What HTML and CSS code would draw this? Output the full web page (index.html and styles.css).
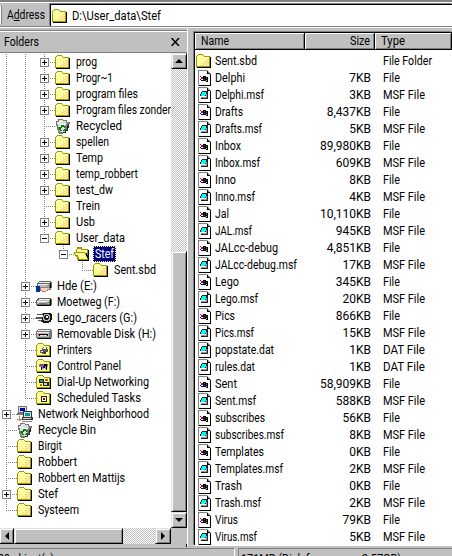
FILE: index.html
```html
<!DOCTYPE html>
<html lang="en">
<head>
<meta charset="utf-8">
<title>D:\User_data\Stef</title>
<link rel="stylesheet" href="styles.css">
</head>
<body>
<svg class="defs" width="0" height="0" shape-rendering="crispEdges">
  <defs>
    <pattern id="dither" width="2" height="2" patternUnits="userSpaceOnUse"><rect width="2" height="2" fill="#ffff99"/><path d="M0 0h1v1H0zM1 1h1v1H1z" fill="#ffcc99"/></pattern>
    <symbol id="folder" viewBox="0 0 16 16">
      <path d="M2 1h5v1h1v1h6v11H0V3h1V2h1z" fill="#999900"/>
      <path d="M2 2h5v1h1v1h5v9H1V3h1z" fill="#ffff99"/>
      <path d="M10 6h3v7H4v-1h2v-2h2V8h2z" fill="url(#dither)"/>
      <path d="M14 4h1v11H1v-1h13z" fill="#000"/>
      <path d="M2 4h5v1H2z" fill="#ffffe8"/>
    </symbol>
    <symbol id="open" viewBox="0 0 16 16">
      <path d="M3 1h5v2h6v11H3v-3H2V3h1z" fill="#999900"/>
      <path d="M3 3h4v1h6v4H3z" fill="#ffff99"/>
      <path d="M0 6h11v1h1v2h1v2h1v3H4v-2H3v-2H1V8H0z" fill="#999900"/>
      <path d="M1 7h10v2h1v2h1v2H5v-2H4V9H2V8H1z" fill="#ffff99"/>
      <path d="M14 4h1v11H4v-1h10zM12 7h1v2h1v3h-1v-2h-1z" fill="#000"/>
    </symbol>
    <symbol id="bin" viewBox="0 0 16 16">
      <path d="M1 3h2V1h5v1h4v2h3v2h-1v4h-1v3h-2v2H8v1H4v-1H3v-3H2V8H1z" fill="#777"/>
      <path d="M2 4h2V2h4v1h3v2h1v1h-2v8H5v-1H4v-4H3V6H2z" fill="#ddd"/>
      <path d="M4 3h3v1H4zM2 5h4v1h5v1H5V6H2z" fill="#fff"/>
      <path d="M14 6v4h-1v3h-2v2H8v-1h2v-2h2V8h1V6z" fill="#222"/>
      <path d="M6 7h3v1h1v2H9V9H7v1H6zM4 9h2v3h1v1H5v-1H4zM8 12h1v-1h2v2H8z" fill="#008000"/>
    </symbol>
    <symbol id="drive" viewBox="0 0 16 16">
      <path d="M2 4h13v1h1v6h-1v1H1v-1H0V6h1V5h1z" fill="#666"/>
      <path d="M3 5h11v1H3zM1 7h12v1H1z" fill="#eee"/>
      <path d="M2 6h11v1H2zM1 8h12v2H1z" fill="#bbb"/>
      <path d="M14 5h1v6h-1zM1 11h14v1H1z" fill="#000"/>
      <path d="M3 9h8v1H3z" fill="#777"/><path d="M11 8h2v1h-2z" fill="#00c000"/>
    </symbol>
    <symbol id="shared" viewBox="0 0 16 16">
      <path d="M3 3h12v1h1v6h-1v1H1V5h1V4h1z" fill="#666"/>
      <path d="M3 4h11v1H3zM2 6h11v1H2z" fill="#eee"/><path d="M2 7h11v2H2z" fill="#bbb"/>
      <path d="M14 5h1v5h-1z" fill="#000"/><path d="M11 7h2v1h-2z" fill="#00c000"/>
      <path d="M0 8h4v6H0z" fill="#003399"/><path d="M4 9h9v1h2v2h-3v1h-2v1H6v-1H4z" fill="#a77"/><path d="M5 10h8v1h-2v2H6v-1H5z" fill="#ffd0c0"/>
    </symbol>
    <symbol id="racer" viewBox="0 0 16 16">
      <path d="M7 3h8v1h1v6h-1v2h-2v1H7v-1H5v-2h1V7h1V5h-1z" fill="#111"/>
      <path d="M8 4h5v1h1v5h-1v1H8v-1H7V6h1z" fill="#bbb"/><path d="M9 5h3v1h1v3h-1v1H9V9H8V6h1z" fill="#222"/>
      <path d="M10 6h2v2h-2z" fill="#eee"/><path d="M1 4h5v1H1zM0 7h6v2H0zM2 10h4v1H2z" fill="#555"/>
    </symbol>
    <symbol id="removable" viewBox="0 0 16 16">
      <path d="M2 3h13v1h1v8h-1v1H1v-1H0V5h1V4h1z" fill="#777"/><path d="M2 4h12v1H2zM1 6h12v1H1z" fill="#eee"/>
      <path d="M1 7h12v4H1z" fill="#bbb"/><path d="M3 8h9v2H3z" fill="#000"/><path d="M4 9h7v1H4z" fill="#ddd"/><path d="M2 8h1v1H2z" fill="#e00"/><path d="M14 5h1v7H2v1h13V5z" fill="#111"/>
    </symbol>
    <symbol id="special" viewBox="0 0 16 16">
      <path d="M2 1h5v1h1v1h6v11H0V3h1V2h1z" fill="#999900"/><path d="M2 2h5v1h1v1h5v9H1V3h1z" fill="#ffff99"/><path d="M14 4h1v11H1v-1h13z" fill="#000"/>
    </symbol>
    <symbol id="printers" viewBox="0 0 16 16"><use href="#special"/><path d="M7 5h4v2h1v3h-2v2H6v-1H4V8h2V6h1z" fill="#555"/><path d="M8 5h2v2H7V6h1zM5 9h2v1H5z" fill="#fff"/><path d="M8 10h2v1H8z" fill="#222"/></symbol>
    <symbol id="control" viewBox="0 0 16 16"><use href="#special"/><path d="M3 6h9v3h-1v2H4V9H3z" fill="#888"/><path d="M4 6h3v2H4z" fill="#c33"/><path d="M8 6h3v2H8zM5 9h1v3H5zM10 8h1v4h-1z" fill="#000"/><path d="M7 8h2v2H7z" fill="#00c"/><path d="M3 9h2v2H3zM8 10h1v1H8z" fill="#fff"/></symbol>
    <symbol id="dialup" viewBox="0 0 16 16"><use href="#special"/><path d="M3 5h5v4H3zM7 8h6v4H7z" fill="#222"/><path d="M4 6h3v2H4z" fill="#4488aa"/><path d="M8 9h3v2H8z" fill="#dd9"/><path d="M9 5h3v2H9zM4 10h2v2H4z" fill="#bb6600"/></symbol>
    <symbol id="tasks" viewBox="0 0 16 16"><use href="#special"/><path d="M5 6h6v6H5z" fill="#222"/><path d="M6 7h4v4H6z" fill="#fff"/><path d="M7 8h2v2H7z" fill="#800"/></symbol>
    <symbol id="network" viewBox="0 0 16 16">
      <path d="M1 0h9v7H9v2H0V7h1z" fill="#777"/><path d="M2 1h7v5H2z" fill="#ddd"/><path d="M3 2h5v3H3z" fill="#0000aa"/>
      <path d="M6 5h9v6h1v3H5v-3h1z" fill="#333"/><path d="M7 6h7v5H7z" fill="#ddd"/><path d="M8 7h5v3H8z" fill="#0099aa"/><path d="M6 12h8v1H6z" fill="#ddd"/>
      <path d="M2 10h1v3H2zM0 13h5v1H0zM5 15h10v1H5z" fill="#888"/><path d="M2 13h2v2H2z" fill="#e90"/>
    </symbol>
    <symbol id="page" viewBox="0 0 13 16"><path d="M0 0h9l4 4v12H0z" fill="#808080"/><path d="M1 1h8v3h3v11H1z" fill="#fff"/><path d="M12 4h1v12H1v-1h11zM9 1h1v2h2v1H9z" fill="#000"/></symbol>
    <symbol id="file" viewBox="0 0 13 16"><use href="#page" width="13" height="16"/><path d="M2 6h1v1H2zM3 7h2v2H3z" fill="#d00"/><path d="M2 9h1v1H2zM3 10h2v1H3z" fill="#00c"/><path d="M5 6h3v1h2v5H8v-1H5z" fill="#000"/><path d="M6 7h1v1H6z" fill="#c00"/><path d="M8 8h1v1H8z" fill="#0a0"/><path d="M5 9h2v1H5z" fill="#22f"/><path d="M8 10h1v1H8z" fill="#dd0"/></symbol>
    <symbol id="msf" viewBox="0 0 13 16"><use href="#page" width="13" height="16"/><path d="M4 4h6v8H3v-1h5V9H2V7h1V5h1z" fill="#222"/><path d="M4 5h4v3H7v1H3V7h1z" fill="#00ffff"/><path d="M3 10h5v1H3zM8 7h1v4H8z" fill="#999"/></symbol>
  </defs>
</svg>
<div class="window">
  <header class="address-bar">
    <div class="grip"></div>
    <span class="address-label"><span class="text" data-width="38">A<u>d</u>dress</span></span>
    <div class="address-box"><svg class="icon" width="16" height="16"><use href="#folder"/></svg><span class="text" data-width="89">D:\User_data\Stef</span></div>
  </header>
  <main class="panes">
    <section class="folders">
      <div class="folders-title"><span class="text" data-width="35">Folders</span><svg class="close" width="9" height="8" viewBox="0 0 9 8"><path d="M.5 0l7.500 8M8 0L.5 8" stroke="#000" stroke-width="1.500"/></svg></div>
      <div class="tree-area">
        <div class="tree" id="tree"></div>
        <div class="vscroll"><div class="button"><i class="arrow up"></i></div><div class="track"></div><div class="thumb"></div><div class="button"><i class="arrow down"></i></div></div>
        <div class="hscroll"><div class="button first"><i class="arrow left"></i></div><div class="thumb"></div><div class="track"></div><div class="button"><i class="arrow right"></i></div></div>
        <div class="corner"></div>
      </div>
    </section>
    <section class="files">
      <div class="head"><div><span class="text" data-width="28">Name</span></div><div class="size"><span class="text" data-width="20">Size</span></div><div><span class="text" data-width="24">Type</span></div></div>
      <div class="list" id="list"></div>
    </section>
  </main>
  <footer class="status"><div class="status-cell first"><span class="text" data-width="56">28 object(s)</span></div><div class="status-cell"><span class="text" data-width="160">171MB (Disk free space: 2.57GB)</span></div></footer>
</div>
<script src="script.js"></script>
</body>
</html>
```
FILE: styles.css
```css
* { box-sizing: border-box; }
body { margin: 0; background: #c0c0c0; overflow: hidden; }
.defs { display: block; position: absolute; }
.window { width: 452px; height: 556px; display: flex; flex-direction: column; overflow: hidden; background: #c0c0c0; color: #000; font: 12px/16px Roboto, "Liberation Sans", sans-serif; }
.text { display: inline-block; height: 16px; white-space: pre; vertical-align: top; }
.ink { display: inline-block; transform-origin: 0 50%; }
.icon { flex: none; display: block; }

.address-bar { height: 27px; flex: none; display: flex; align-items: center; border-top: 2px solid #808080; border-bottom: 1px solid #808080; box-shadow: inset 0 1px #fff; padding-top: 2px; }
.grip { width: 2px; height: 18px; border-right: 1px solid #808080; background: #fff; }
.address-label { width: 48px; padding-left: 5px; }
.address-box { flex: 1; align-self: stretch; display: flex; align-items: center; gap: 4px; padding-left: 1px; background: #fff; border: solid #000; border-width: 1px 0 0 1px; box-shadow: -1px -1px #808080; }

.panes { flex: 1; min-height: 0; display: flex; gap: 6px; border-top: 1px solid #fff; }
.folders { width: 188px; display: flex; flex-direction: column; border-right: 1px solid #fff; border-top: 2px solid #c0c0c0; }
.folders-title { height: 23px; display: flex; align-items: center; justify-content: space-between; padding: 1px 7px 0 4px; border-top: 1px solid #808080; border-bottom: 1px solid #808080; box-shadow: inset 0 1px #fff; }
.tree-area { flex: 1; display: grid; grid-template: 475px 16px / 171px 16px; border-right: 1px solid #000; }
.tree { background: #fff; padding-top: 1px; overflow: hidden; }
.node { display: flex; height: 16px; margin-left: -2px; }
.cell { width: 19px; flex: none; height: 16px; position: relative; }
.cell.line, .cell.last { background: repeating-linear-gradient(#808080 0 1px, transparent 1px 2px) 8px 0 / 1px 16px no-repeat; }
.cell.last { background-size: 1px 9px; }
.cell.joint::before { content: ""; position: absolute; left: 8px; top: 8px; width: 11px; height: 1px; background: repeating-linear-gradient(90deg, #808080 0 1px, transparent 1px 2px); }
.box { position: absolute; left: 4px; top: 4px; width: 9px; height: 9px; border: 1px solid #808080; background: linear-gradient(#000, #000) 1px 3px / 5px 1px no-repeat, #fff; }
.box.plus { background: linear-gradient(#000, #000) 1px 3px / 5px 1px no-repeat, linear-gradient(#000, #000) 3px 1px / 1px 5px no-repeat, #fff; }
.name { margin-left: 3px; padding: 0 2px; }
.name.selected { background: #000080; color: #fff; outline: 1px dotted #ffff7f; outline-offset: -1px; }

.vscroll { display: flex; flex-direction: column; }
.track { flex: 1; background: repeating-conic-gradient(#c0c0c0 0 25%, #fff 0 50%) 0 0 / 2px 2px; }
.thumb, .button { background: #c0c0c0; border: 1px solid; border-color: #dfdfdf #000 #000 #dfdfdf; box-shadow: inset 1px 1px #fff, inset -1px -1px #808080; }
.vscroll .thumb { height: 261px; }
.button { width: 16px; height: 16px; flex: none; display: flex; align-items: center; justify-content: center; }
.arrow { border: 4px solid transparent; }
.up { border-bottom-color: #000; border-top: 0; }
.down { border-top-color: #000; border-bottom: 0; }
.left { border-right-color: #000; border-left: 0; }
.right { border-left-color: #000; border-right: 0; }
.hscroll { display: flex; }
.hscroll .first { width: 14px; border-left: 0; }
.hscroll .thumb { width: 109px; }
.corner { background: #c0c0c0; }

.files { flex: 1; margin-top: 4px; margin-bottom: 2px; border: solid #000; border-width: 1px 0 0 1px; box-shadow: -1px -1px #808080, 0 1px #fff; display: flex; flex-direction: column; background: #fff; overflow: hidden; }
.head { display: grid; grid-template-columns: 110px 70px 1fr; height: 17px; flex: none; border-bottom: 1px solid #000; background: #c0c0c0; }
.head > div { padding: 0 6px; border-right: 1px solid #000; box-shadow: inset 1px 1px #fff, inset -1px -1px #808080; }
.head .size { text-align: right; padding-right: 4px; }
.head .size .text { text-align: left; }
.list { padding-top: 2px; }
.row { display: grid; grid-template-columns: 18px 87px 70px 1fr; height: 17px; align-items: center; padding-left: 2px; }
.row .icon { margin-left: -1px; }
.row .page { margin-left: 1px; }
.row .size { text-align: right; padding-right: 1px; }
.row .type { padding-left: 11px; }

.status { height: 9px; flex: none; display: flex; gap: 3px; background: #c0c0c0; padding-top: 1px; }
.status-cell { flex: 1; height: 16px; border-top: 1px solid #808080; border-left: 1px solid #808080; padding: 2px 0 0 2px; }
.status-cell.first { flex: none; width: 235px; border-left: 0; border-right: 1px solid #fff; padding-left: 0; text-indent: -2px; }
.status-cell.first .text { text-indent: 0; }
```
FILE: script.js
```js
// Guide codes per level: | line, . blank, + expander, m open expander that
// ends its line, t joint, l last joint. The number is the label width.
const nodes = [
  ["||+", "folder", "prog", 21], ["||+", "folder", "Progr~1", 37], ["||+", "folder", "program files", 62],
  ["||+", "folder", "Program files zonder", 95], ["||t", "bin", "Recycled", 46], ["||+", "folder", "spellen", 33],
  ["||+", "folder", "Temp", 27], ["||+", "folder", "temp_robbert", 62], ["||+", "folder", "test_dw", 37],
  ["||t", "folder", "Trein", 24], ["||+", "folder", "Usb", 19], ["||m", "folder", "User_data", 49],
  ["||.m", "open", "Stef", 19, true], ["||..l", "folder", "Sent.sbd", 42], ["|+", "shared", "Hde (E:)", 40],
  ["|+", "drive", "Moetweg (F:)", 63], ["|+", "racer", "Lego_racers (G:)", 80], ["|+", "removable", "Removable Disk (H:)", 99],
  ["|t", "printers", "Printers", 35], ["|t", "control", "Control Panel", 64], ["|t", "dialup", "Dial-Up Networking", 92],
  ["|l", "tasks", "Scheduled Tasks", 84], ["+", "network", "Network Neighborhood", 111], ["t", "bin", "Recycle Bin", 58],
  ["t", "folder", "Birgit", 24], ["t", "folder", "Robbert", 39], ["t", "folder", "Robbert en Mattijs", 87],
  ["+", "folder", "Stef", 20], ["l", "folder", "Systeem", 41]
];
const cells = {
  "|": '<i class="cell line"></i>', ".": '<i class="cell"></i>',
  "+": '<i class="cell line joint"><b class="box plus"></b></i>',
  "m": '<i class="cell last joint"><b class="box"></b></i>',
  "t": '<i class="cell line joint"></i>', "l": '<i class="cell last joint"></i>'
};
const label = (text, width) => `<span class="text" data-width="${width}">${text}</span>`;

document.getElementById("tree").innerHTML = nodes.map(([guide, icon, name, width, selected]) =>
  `<div class="node">${[...guide].map(c => cells[c]).join("")}<svg class="icon" width="16" height="16"><use href="#${icon}"/></svg><span class="name${selected ? " selected" : ""}">${label(name, width)}</span></div>`).join("");

const files = [
  ["Sent.sbd", "", 42], ["Delphi", "7", 30], ["Delphi.msf", "3", 49], ["Drafts", "8,437", 28], ["Drafts.msf", "5", 47],
  ["Inbox", "89,980", 26], ["Inbox.msf", "609", 45], ["Inno", "8", 21], ["Inno.msf", "4", 40], ["Jal", "10,110", 14],
  ["JAL.msf", "945", 37], ["JALcc-debug", "4,851", 63], ["JALcc-debug.msf", "17", 82], ["Lego", "345", 24],
  ["Lego.msf", "20", 43], ["Pics", "866", 20], ["Pics.msf", "15", 39], ["popstate.dat", "1", 59], ["rules.dat", "1", 40],
  ["Sent", "58,909", 22], ["Sent.msf", "588", 41], ["subscribes", "56", 50], ["subscribes.msf", "8", 69],
  ["Templates", "0", 49], ["Templates.msf", "2", 68], ["Trash", "0", 27], ["Trash.msf", "2", 46], ["Virus", "79", 23], ["Virus.msf", "5", 42]
];
const typeWidths = { "File Folder": 49, "MSF File": 42, "DAT File": 42, "File": 17 };
document.getElementById("list").innerHTML = files.map(([name, size, width]) => {
  const ext = name.split(".")[1];
  const type = ext === "sbd" ? "File Folder" : ext ? ext.toUpperCase() + " File" : "File";
  const icon = ext === "sbd" ? '<svg class="icon" width="16" height="16"><use href="#folder"/></svg>'
    : `<svg class="icon page" width="13" height="16"><use href="#${ext ? "msf" : "file"}"/></svg>`;
  return `<div class="row">${icon}<div>${label(name, width)}</div><div class="size">${size && size + "KB"}</div><div class="type">${label(type, typeWidths[type])}</div></div>`;
}).join("");

// Condense each label horizontally to its width.
for (const el of document.querySelectorAll(".text[data-width]")) {
  const width = Number(el.dataset.width);
  el.innerHTML = `<span class="ink">${el.innerHTML}</span>`;
  const ink = el.firstChild;
  ink.style.transform = `scaleX(${width / ink.getBoundingClientRect().width})`;
  el.style.width = width + "px";
}
```
